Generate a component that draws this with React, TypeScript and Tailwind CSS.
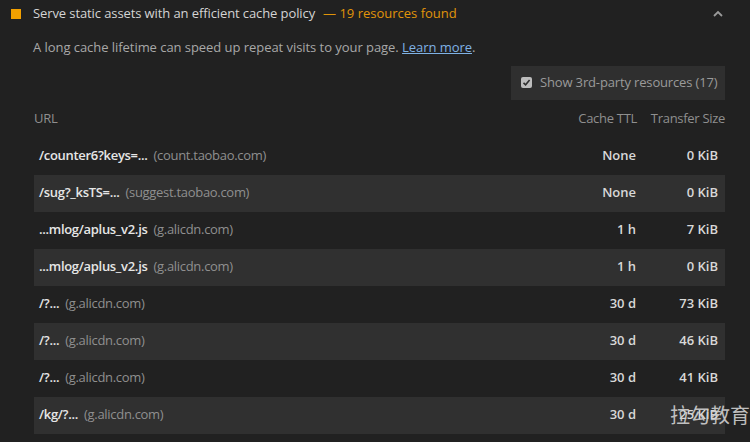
const rows = [
  { url: "/counter6?keys=...", host: "(count.taobao.com)", ttl: "None", size: "0 KiB" },
  { url: "/sug?_ksTS=...", host: "(suggest.taobao.com)", ttl: "None", size: "0 KiB" },
  { url: "...mlog/aplus_v2.js", host: "(g.alicdn.com)", ttl: "1 h", size: "7 KiB" },
  { url: "...mlog/aplus_v2.js", host: "(g.alicdn.com)", ttl: "1 h", size: "0 KiB" },
  { url: "/?...", host: "(g.alicdn.com)", ttl: "30 d", size: "73 KiB" },
  { url: "/?...", host: "(g.alicdn.com)", ttl: "30 d", size: "46 KiB" },
  { url: "/?...", host: "(g.alicdn.com)", ttl: "30 d", size: "41 KiB" },
  { url: "/kg/?...", host: "(g.alicdn.com)", ttl: "30 d", size: "25 KiB" },
];

export default function App() {
  return (
    <div className="relative w-[750px] h-[442px] overflow-hidden bg-[#212121] font-['Open_Sans',sans-serif] text-[13px]">
      {/* Header */}
      <div className="flex items-center h-[28px] pl-[11px] pr-[26px]">
        <div className="w-[10px] h-[10px] bg-[#f2a000]" />
        <div className="ml-[12px] text-[#d4d4d4] tracking-[-0.1px]">
          Serve static assets with an efficient cache policy
        </div>
        <div className="ml-[8px] text-[#e0940a] tracking-[0px]">— 19 resources found</div>
        <svg className="ml-auto" width="12" height="8" viewBox="0 0 12 8">
          <path d="M2 6 L6 2 L10 6" stroke="#9a9a9a" strokeWidth="1.8" fill="none" />
        </svg>
      </div>

      {/* Description */}
      <div className="pl-[33px] mt-[10px] text-[#a8a8a8] tracking-[-0.05px]">
        A long cache lifetime can speed up repeat visits to your page.{" "}
        <span className="text-[#7fb2e5] underline">Learn more</span>.
      </div>

      {/* Third-party toggle */}
      <div className="flex justify-end pr-[25px] mt-[8px]">
        <div className="flex items-center h-[34px] w-[214px] bg-[#2f2f2f] pl-[10px]">
          <div className="w-[11px] h-[11px] rounded-[2px] bg-[#bdbdbd] flex items-center justify-center">
            <svg width="9" height="9" viewBox="0 0 9 9">
              <path d="M1.5 4.8 L3.6 6.8 L7.6 2" stroke="#2f2f2f" strokeWidth="1.6" fill="none" />
            </svg>
          </div>
          <span className="ml-[8px] text-[#9a9a9a] tracking-[-0.15px]">Show 3rd-party resources (17)</span>
        </div>
      </div>

      {/* Table */}
      <div className="pl-[34px] pr-[25px] mt-[8px]">
        <div className="flex items-center h-[22px] text-[#8f8f8f] tracking-[-0.3px]">
          <div className="flex-1">URL</div>
          <div className="w-[100px] text-right">Cache TTL</div>
          <div className="w-[88px] text-right">Transfer Size</div>
        </div>
        <div className="mt-[8px]">
          {rows.map((r, i) => (
            <div
              key={i}
              className={`flex items-center h-[37px] pl-[5px] pr-[7px] ${i % 2 === 1 ? "bg-[#303030]" : ""}`}
            >
              <div className="flex-1 tracking-[-0.3px]">
                <span className="text-[#e6e6e6] font-semibold">{r.url}</span>
                <span className="ml-[6px] text-[#8f8f8f]">{r.host}</span>
              </div>
              <div className="w-[100px] text-right text-[#d8d8d8] font-semibold">{r.ttl}</div>
              <div className="w-[82px] text-right text-[#d8d8d8] font-semibold">{r.size}</div>
            </div>
          ))}
        </div>
      </div>

      {/* Watermark */}
      <div className="absolute left-[670px] top-[400px] whitespace-nowrap text-[20px] text-[#d0d0d0] font-['Noto_Sans_CJK_SC',sans-serif] opacity-90">
        拉勾教育
      </div>
    </div>
  );
}
